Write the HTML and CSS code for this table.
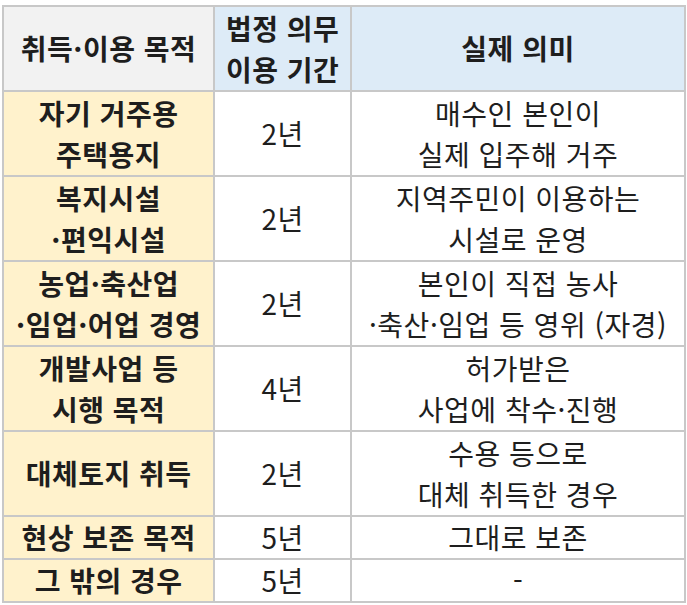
FILE: index.html
```html
<!DOCTYPE html>
<html lang="ko">
<head>
<meta charset="utf-8">
<link rel="stylesheet" href="styles.css">
</head>
<body>
<div class="wrap">
<table class="tbl">
  <colgroup>
    <col class="c1"><col class="c2"><col class="c3">
  </colgroup>
  <thead>
    <tr>
      <th class="h-gray">취득·이용 목적</th>
      <th class="h-blue">법정 의무<br>이용 기간</th>
      <th class="h-blue">실제 의미</th>
    </tr>
  </thead>
  <tbody>
    <tr class="r2">
      <td class="purpose">자기 거주용<br>주택용지</td>
      <td>2년</td>
      <td>매수인 본인이<br>실제 입주해 거주</td>
    </tr>
    <tr class="r2">
      <td class="purpose">복지시설<br>·편익시설</td>
      <td>2년</td>
      <td>지역주민이 이용하는<br>시설로 운영</td>
    </tr>
    <tr class="r2">
      <td class="purpose">농업·축산업<br>·임업·어업 경영</td>
      <td>2년</td>
      <td>본인이 직접 농사<br>·축산·임업 등 영위 (자경)</td>
    </tr>
    <tr class="r2">
      <td class="purpose">개발사업 등<br>시행 목적</td>
      <td>4년</td>
      <td>허가받은<br>사업에 착수·진행</td>
    </tr>
    <tr class="r2">
      <td class="purpose">대체토지 취득</td>
      <td>2년</td>
      <td>수용 등으로<br>대체 취득한 경우</td>
    </tr>
    <tr class="r1">
      <td class="purpose">현상 보존 목적</td>
      <td>5년</td>
      <td>그대로 보존</td>
    </tr>
    <tr class="r1 last">
      <td class="purpose">그 밖의 경우</td>
      <td>5년</td>
      <td>-</td>
    </tr>
  </tbody>
</table>
</div>
</body>
</html>
```

FILE: styles.css
```css
html, body {
  margin: 0;
  padding: 0;
  background: #ffffff;
}
.wrap {
  padding: 5px 0 0 2px;
}
.tbl {
  border-collapse: separate;
  border-spacing: 2px;
  background: #c8c8c8;
  table-layout: fixed;
  width: 684px;
  font-family: "Noto Sans CJK KR", "Noto Sans", sans-serif;
  font-size: 28px;
  letter-spacing: 0.5px;
  color: #1e1e1e;
}
.c1 { width: 208px; }
.c2 { width: 134px; }
.c3 { width: 330px; }
.tbl th, .tbl td {
  padding: 0;
  text-align: center;
  vertical-align: middle;
  line-height: 41px;
  background: #ffffff;
  font-weight: 400;
  white-space: nowrap;
}
.tbl th {
  font-weight: 700;
  height: 83px;
}
.h-gray { background: #f2f2f2 !important; }
.h-blue { background: #ddebf7 !important; }
.tbl td.purpose {
  background: #fff2cc;
  font-weight: 700;
}
.r2 td { height: 83px; }
.r1 td { height: 41px; }
.last td { height: 40px; }
```
